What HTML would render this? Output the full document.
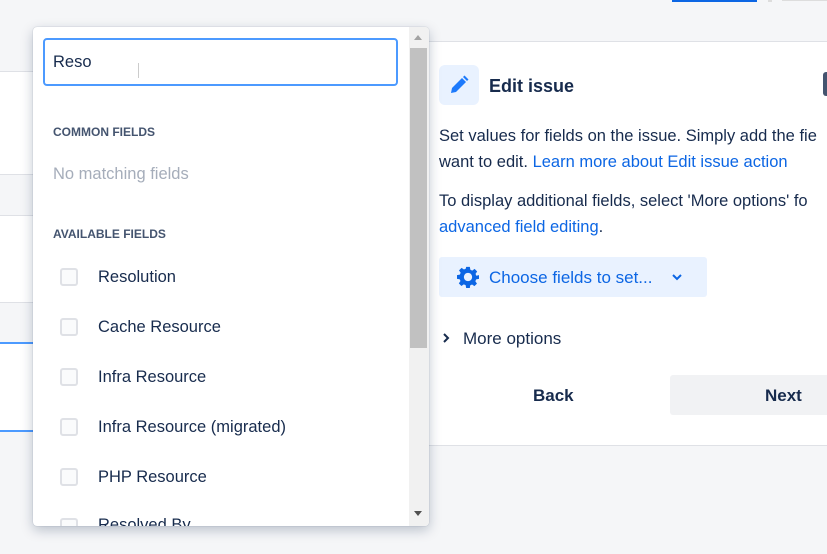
<!DOCTYPE html>
<html><head><style>
body{margin:0;width:827px;height:554px;background:#f5f6f8;font-family:"Liberation Sans",sans-serif;position:relative;overflow:hidden;color:#172b4d}
.a{position:absolute}
.t{font-size:16px;white-space:nowrap}
.cb{position:absolute;left:60px;width:14px;height:14px;border:2px solid #dfe1e6;border-radius:3px;background:#fafbfc}
.it{position:absolute;left:98px;font-size:16.5px;color:#172b4d}
</style></head><body>
<div class="a" style="left:672px;top:0;width:85px;height:2px;background:#0c66e4"></div>
<div class="a" style="left:768px;top:0;width:4px;height:2px;background:#ddd"></div>
<div class="a" style="left:782px;top:0;width:45px;height:1px;background:#ddd"></div>
<div class="a" style="left:0;top:71px;width:40px;height:102px;background:#fff;border-top:1px solid #dfe1e6;border-bottom:1px solid #dfe1e6"></div>
<div class="a" style="left:0;top:215px;width:40px;height:86px;background:#fff;border-top:1px solid #dfe1e6;border-bottom:1px solid #dfe1e6"></div>
<div class="a" style="left:0;top:342px;width:40px;height:86px;background:#fff;border-top:2px solid #4c9aff;border-bottom:2px solid #4c9aff"></div>
<div class="a" style="left:428px;top:41px;width:399px;height:403px;background:#fff;border-top:1px solid #dfe1e6;border-bottom:1px solid #dfe1e6"></div>
<div class="a" style="left:439px;top:65px;width:40px;height:40px;background:#e9f2ff;border-radius:6px"></div>
<svg class="a" style="left:448px;top:74px" width="22" height="22" viewBox="0 0 22 22"><path d="M3 19 L4 14 L14 4 L18 8 L8 18 Z" fill="#1d7afc"/><path d="M15 3 L16.5 1.5 L20.5 5.5 L19 7 Z" fill="#1d7afc"/></svg>
<div class="a t" style="left:489px;top:76px;font-size:18px;font-weight:bold;color:#172b4d">Edit issue</div>
<div class="a" style="left:823px;top:72px;width:10px;height:24px;background:#44546f;border-radius:3px"></div>
<div class="a t" style="left:439px;top:123px;color:#172b4d;line-height:26px;font-size:16.5px">Set values for fields on the issue. Simply add the fie<br>want to edit. <span style="color:#0c66e4">Learn more about Edit issue action</span></div>
<div class="a t" style="left:439px;top:188px;color:#172b4d;line-height:26px;font-size:16.5px">To display additional fields, select 'More options' fo<br><span style="color:#0c66e4">advanced field editing</span>.</div>
<div class="a" style="left:439px;top:257px;width:268px;height:40px;background:#e9f2ff;border-radius:3px"></div>
<svg class="a" style="left:457px;top:266px" width="22" height="22" viewBox="0 0 24 24"><path fill="#0c66e4" fill-rule="evenodd" d="M10 1h4l.6 3.1 2 .9 2.6-1.8 2.8 2.8-1.8 2.6.9 2L24 10v4l-3.1.6-.9 2 1.8 2.6-2.8 2.8-2.6-1.8-2 .9L14 24h-4l-.6-3.1-2-.9-2.6 1.8-2.8-2.8 1.8-2.6-.9-2L0 14v-4l3.1-.6.9-2L2.2 4.8 5 2l2.6 1.8 2-.9zM12 7.5a4.5 4.5 0 1 0 .01 0z"/></svg>
<div class="a t" style="left:489px;top:268px;font-size:17px;color:#0c66e4">Choose fields to set...</div>
<svg class="a" style="left:671px;top:272px" width="12" height="10" viewBox="0 0 12 10"><path d="M2 3 L6 7 L10 3" stroke="#0c66e4" stroke-width="2" fill="none"/></svg>
<svg class="a" style="left:442px;top:332px" width="8" height="12" viewBox="0 0 8 12"><path d="M2 2 L6 6 L2 10" stroke="#172b4d" stroke-width="2" fill="none"/></svg>
<div class="a t" style="left:463px;top:329px;font-size:17px">More options</div>
<div class="a t" style="left:533px;top:386px;font-size:17px;font-weight:bold;color:#172b4d">Back</div>
<div class="a" style="left:670px;top:375px;width:160px;height:40px;background:#f1f2f4;border-radius:3px"></div>
<div class="a t" style="left:765px;top:386px;font-size:17px;font-weight:bold;color:#172b4d">Next</div>
<div class="a" style="left:33px;top:27px;width:396px;height:499px;background:#fff;border-radius:4px;box-shadow:0 4px 12px rgba(9,30,66,.25),0 0 1px rgba(9,30,66,.31);overflow:hidden">
<div class="a" style="left:376px;top:0;width:20px;height:499px;background:#f1f1f1"></div>
<div class="a" style="left:377px;top:21px;width:17px;height:300px;background:#c1c1c1"></div>
<svg class="a" style="left:381px;top:8px" width="8" height="6"><path d="M0 5 L4 0 L8 5Z" fill="#a3a3a3"/></svg>
<svg class="a" style="left:381px;top:484px" width="8" height="6"><path d="M0 0 L4 5 L8 0Z" fill="#505050"/></svg>
</div>
<div class="a" style="left:43px;top:38px;width:351px;height:44px;border:2px solid #4c9aff;border-radius:4px;background:#fff"></div>
<div class="a t" style="left:53px;top:53px;color:#172b4d;font-size:16.5px">Reso</div>
<div class="a" style="left:138px;top:63px;width:1px;height:15px;background:#ccc"></div>
<div class="a" style="left:53px;top:125px;font-size:12px;font-weight:bold;color:#44546f">COMMON FIELDS</div>
<div class="a t" style="left:53px;top:165px;color:#a5adba;font-size:16.5px">No matching fields</div>
<div class="a" style="left:53px;top:227px;font-size:12px;font-weight:bold;color:#44546f">AVAILABLE FIELDS</div>
<div class="cb" style="top:268px"></div><div class="it" style="top:268px">Resolution</div>
<div class="cb" style="top:318px"></div><div class="it" style="top:318px">Cache Resource</div>
<div class="cb" style="top:368px"></div><div class="it" style="top:368px">Infra Resource</div>
<div class="cb" style="top:418px"></div><div class="it" style="top:418px">Infra Resource (migrated)</div>
<div class="cb" style="top:468px"></div><div class="it" style="top:468px">PHP Resource</div>
<div class="a" style="left:33px;top:510px;width:376px;height:16px;overflow:hidden">
<div class="cb" style="left:27px;top:8px"></div><div class="it" style="left:65px;top:6px">Resolved By</div></div>
</body></html>
